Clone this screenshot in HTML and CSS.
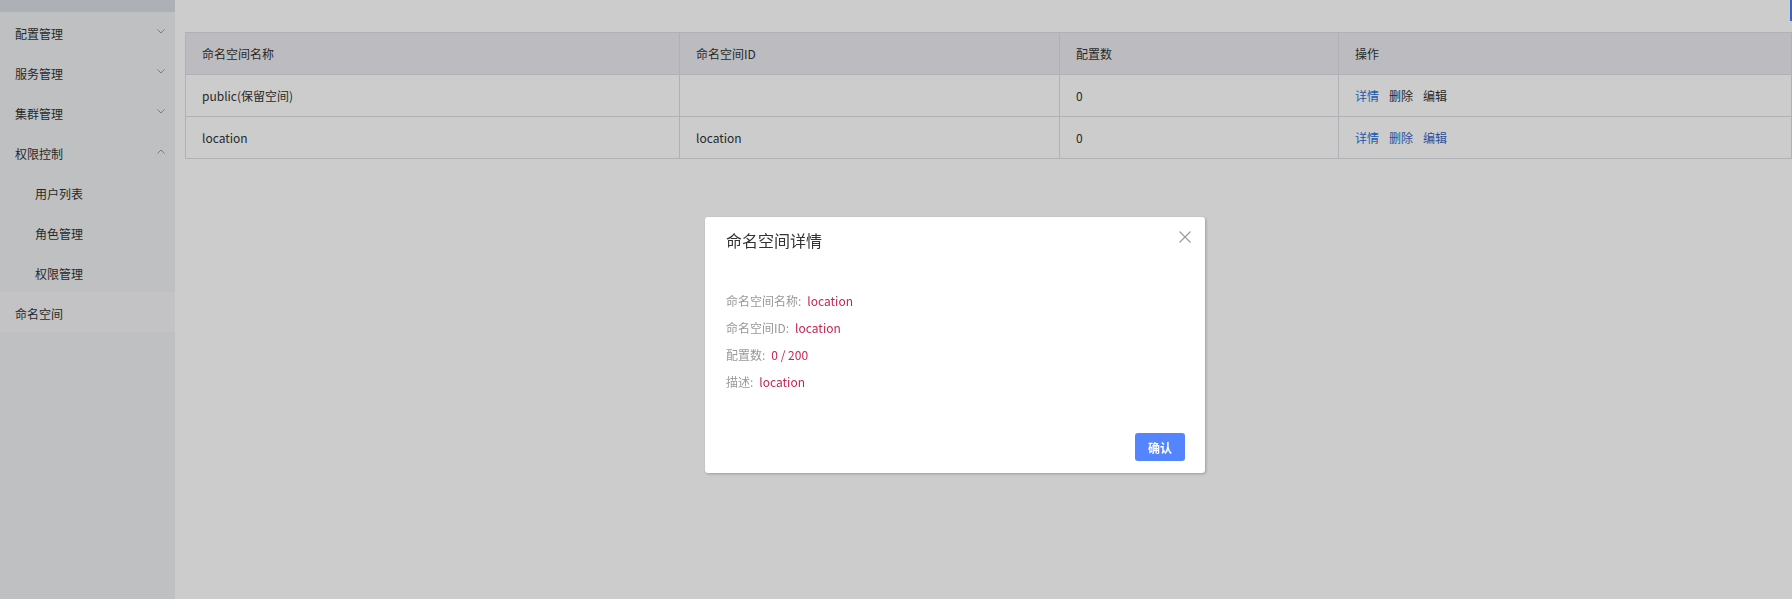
FILE: index.html
```html
<!DOCTYPE html>
<html lang="zh-CN">
<head>
<meta charset="utf-8">
<title>命名空间</title>
<link rel="stylesheet" href="styles.css">
</head>
<body>
<div class="app">
  <aside class="sidebar">
    <div class="side-top"></div>
    <div class="menu-item"><span>配置管理</span><svg class="chev" viewBox="0 0 8 5" width="8" height="5"><polyline points="0.5,0.5 4,4 7.5,0.5"/></svg></div>
    <div class="menu-item"><span>服务管理</span><svg class="chev" viewBox="0 0 8 5" width="8" height="5"><polyline points="0.5,0.5 4,4 7.5,0.5"/></svg></div>
    <div class="menu-item"><span>集群管理</span><svg class="chev" viewBox="0 0 8 5" width="8" height="5"><polyline points="0.5,0.5 4,4 7.5,0.5"/></svg></div>
    <div class="menu-item"><span>权限控制</span><svg class="chev" viewBox="0 0 8 5" width="8" height="5"><polyline points="0.5,4.5 4,1 7.5,4.5"/></svg></div>
    <div class="menu-item sub"><span>用户列表</span></div>
    <div class="menu-item sub"><span>角色管理</span></div>
    <div class="menu-item sub"><span>权限管理</span></div>
    <div class="menu-item active"><span>命名空间</span></div>
  </aside>
  <main class="main">
    <table class="grid">
      <thead>
        <tr>
          <th class="c1">命名空间名称</th>
          <th class="c2">命名空间ID</th>
          <th class="c3">配置数</th>
          <th class="c4">操作</th>
        </tr>
      </thead>
      <tbody>
        <tr>
          <td>public(保留空间)</td>
          <td></td>
          <td>0</td>
          <td><a class="act">详情</a><a class="act plain">删除</a><a class="act plain">编辑</a></td>
        </tr>
        <tr>
          <td>location</td>
          <td>location</td>
          <td>0</td>
          <td><a class="act">详情</a><a class="act visited">删除</a><a class="act visited">编辑</a></td>
        </tr>
      </tbody>
    </table>
  </main>
</div>
<div class="edge-bar"></div>
<div class="mask"></div>
<div class="dialog">
  <div class="dlg-head">
    <span class="dlg-title">命名空间详情</span>
    <svg class="dlg-close" viewBox="0 0 12 12" width="12" height="12"><path d="M0.5 0.5 L11.5 11.5 M11.5 0.5 L0.5 11.5"/></svg>
  </div>
  <div class="dlg-body">
    <div class="kv"><span class="k">命名空间名称:</span><span class="v">location</span></div>
    <div class="kv"><span class="k">命名空间ID:</span><span class="v">location</span></div>
    <div class="kv"><span class="k">配置数:</span><span class="v">0 / 200</span></div>
    <div class="kv"><span class="k">描述:</span><span class="v">location</span></div>
  </div>
  <div class="dlg-foot">
    <button class="btn-primary">确认</button>
  </div>
</div>
</body>
</html>
```

FILE: styles.css
```css
html, body {
  margin: 0;
  padding: 0;
  height: 100%;
  overflow: hidden;
}
body {
  font-family: "Noto Sans CJK SC", "Noto Sans", sans-serif;
  font-size: 12px;
  color: #333;
  background: #fff;
}
.app {
  display: flex;
  height: 100%;
}
.sidebar {
  width: 175px;
  flex: none;
  background: #eef0f3;
  display: flex;
  flex-direction: column;
}
.side-top {
  height: 12px;
  background: #d9dce1;
}
.menu-item {
  height: 40px;
  display: flex;
  align-items: center;
  justify-content: space-between;
  padding: 0 10px 0 15px;
  color: #333;
  line-height: 16px;
}
.menu-item span {
  position: relative;
  top: 2px;
}
.menu-item.sub {
  padding-left: 35px;
}
.menu-item.active {
  background: #f4f4f8;
}
.chev {
  fill: none;
  stroke: #9a9a9a;
  stroke-width: 1;
  margin-top: -2px;
}
.main {
  flex: 1;
  padding: 32px 0 0 10px;
  min-width: 0;
}
.grid {
  width: 100%;
  table-layout: fixed;
  border-collapse: separate;
  border-spacing: 0;
  border-top: 1px solid #dcdee3;
  border-left: 1px solid #dcdee3;
}
.grid th, .grid td {
  padding: 12px 16px;
  line-height: 17px;
  text-align: left;
  font-weight: normal;
  border-right: 1px solid #dcdee3;
  border-bottom: 1px solid #dcdee3;
  white-space: nowrap;
}
.grid th {
  background: #ebecf0;
  color: #333;
}
.c1 { width: 461px; }
.c2 { width: 347px; }
.c3 { width: 246px; }
.act {
  color: #2470dc;
  margin-right: 10px;
  cursor: pointer;
}
.act.plain { color: #333; }
.act.visited { color: #3466c2; }
.edge-bar {
  position: fixed;
  top: 0;
  right: 0;
  width: 2px;
  height: 21px;
  background: #4a7cf8;
}
.mask {
  position: fixed;
  inset: 0;
  background: rgba(0, 0, 0, 0.2);
}
.dialog {
  position: fixed;
  left: 705px;
  top: 217px;
  width: 500px;
  height: 256px;
  box-sizing: border-box;
  background: #fff;
  border-radius: 3px;
  box-shadow: 1px 1px 3px rgba(0, 0, 0, 0.25);
  display: flex;
  flex-direction: column;
}
.dlg-head {
  display: flex;
  justify-content: space-between;
  align-items: flex-start;
  padding: 11px 14px 0 21px;
  height: 36px;
  box-sizing: border-box;
}
.dlg-title {
  font-size: 16px;
  line-height: 24px;
  color: #333;
}
.dlg-close {
  fill: none;
  stroke: #999;
  stroke-width: 1.1;
  margin-top: 3px;
}
.dlg-body {
  padding: 34px 21px 0;
  flex: 1;
}
.kv {
  line-height: 27px;
  height: 27px;
}
.k { color: #999; }
.v {
  color: #c7254e;
  margin-left: 6px;
}
.dlg-foot {
  display: flex;
  justify-content: flex-end;
  padding: 0 20px 12px;
}
.btn-primary {
  width: 50px;
  height: 28px;
  border: none;
  border-radius: 3px;
  background: #5584ff;
  color: #fff;
  font-family: "Noto Sans CJK SC", sans-serif;
  font-size: 12px;
  font-weight: bold;
  padding: 0;
}
```
